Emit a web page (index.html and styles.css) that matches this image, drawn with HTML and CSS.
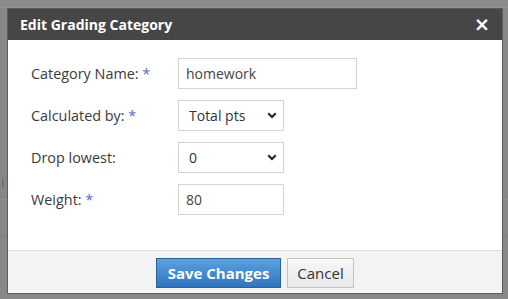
FILE: index.html
```html
<!DOCTYPE html>
<html>
<head>
<meta charset="utf-8">
<link rel="stylesheet" href="styles.css">
</head>
<body>
<div class="page">
  <div class="bg-row bg-top"></div>
  <div class="bg-row bg-r1"></div>
  <div class="bg-row bg-r2"><span class="bg-text">i</span></div>
  <div class="bg-row bg-r3"></div>
</div>
<div class="modal">
  <div class="modal-header">
    <span class="modal-title">Edit Grading Category</span>
    <span class="modal-close">×</span>
  </div>
  <div class="modal-body">
    <div class="form">
      <label class="label">Category Name: <span class="req">*</span></label>
      <div class="field input input-wide">homework</div>
      <label class="label">Calculated by: <span class="req">*</span></label>
      <div class="field select"><span>Total pts</span>
        <svg class="chev" width="10" height="7" viewBox="0 0 10 7"><path d="M1.2 1.2 L5 5 L8.8 1.2" fill="none" stroke="#222" stroke-width="2"/></svg>
      </div>
      <label class="label">Drop lowest:</label>
      <div class="field select"><span>0</span>
        <svg class="chev" width="10" height="7" viewBox="0 0 10 7"><path d="M1.2 1.2 L5 5 L8.8 1.2" fill="none" stroke="#222" stroke-width="2"/></svg>
      </div>
      <label class="label">Weight: <span class="req">*</span></label>
      <div class="field input">80</div>
    </div>
  </div>
  <div class="modal-footer">
    <button class="btn btn-primary">Save Changes</button>
    <button class="btn btn-default">Cancel</button>
  </div>
</div>
</body>
</html>
```

FILE: styles.css
```css
html, body {
  margin: 0;
  padding: 0;
}
body {
  width: 508px;
  height: 299px;
  background: #878787;
  font-family: "Open Sans", "Liberation Sans", sans-serif;
  overflow: hidden;
  position: relative;
}
.page {
  display: flex;
  flex-direction: column;
}
.bg-row {
  box-sizing: border-box;
}
.bg-top {
  height: 8px;
  background: #8b8b8b;
  border-bottom: 1px solid #939393;
}
.bg-r1 {
  height: 192px;
  border-bottom: 1px solid #8f8f8f;
}
.bg-r2 {
  height: 37px;
  border-bottom: 1px solid #808080;
  position: relative;
}
.bg-text {
  position: absolute;
  left: 1px;
  top: -28px;
  font-size: 15px;
  color: #6f6470;
}
.bg-r3 {
  height: 60px;
}
.modal {
  position: absolute;
  left: 7px;
  top: 8px;
  width: 494px;
  height: 284px;
  border: 1px solid #5c5c5c;
  display: flex;
  flex-direction: column;
  background: #fff;
}
.modal-header {
  height: 31px;
  background: #464646;
  display: flex;
  align-items: center;
  justify-content: space-between;
  padding: 0 12px 0 12px;
  box-sizing: border-box;
  flex: none;
}
.modal-title {
  color: #fff;
  font-weight: 700;
  font-size: 14px;
}
.modal-close {
  color: #fff;
  font-weight: 700;
  font-size: 19px;
  line-height: 1;
  font-family: "DejaVu Sans", sans-serif;
}
.modal-body {
  flex: 1;
  padding: 18px 0 0 23px;
}
.form {
  display: grid;
  grid-template-columns: 147px auto;
  row-gap: 11px;
  align-items: center;
}
.label {
  font-size: 14.4px;
  color: #3a3a3a;
}
.req {
  color: #5468d4;
}
.field {
  box-sizing: border-box;
  height: 31px;
  border: 1px solid #d4d4d4;
  font-size: 14px;
  color: #444;
  display: flex;
  align-items: center;
  justify-self: start;
}
.input {
  width: 106px;
  padding-left: 7px;
}
.input-wide {
  width: 179px;
}
.select {
  width: 106px;
  padding: 0 6px 0 10px;
  justify-content: space-between;
  color: #333;
}
.chev {
  display: block;
}
.modal-footer {
  height: 43px;
  box-sizing: border-box;
  background: #f3f3f3;
  border-top: 1px solid #dcdcdc;
  display: flex;
  justify-content: center;
  align-items: center;
  gap: 6px;
  padding-top: 1px;
  flex: none;
}
.btn {
  height: 30px;
  box-sizing: border-box;
  font-family: "Open Sans", "Liberation Sans", sans-serif;
  font-size: 15px;
  padding: 0;
  margin: 0;
  white-space: nowrap;
  cursor: pointer;
}
.btn-primary {
  width: 125px;
  color: #fff;
  font-weight: 700;
  background: linear-gradient(#5aa2e0, #2f74bd);
  border: 1px solid #2b6199;
}
.btn-default {
  width: 67px;
  color: #333;
  background: linear-gradient(#f7f7f7, #e8e8e8);
  border: 1px solid #c2c2c2;
}
```
